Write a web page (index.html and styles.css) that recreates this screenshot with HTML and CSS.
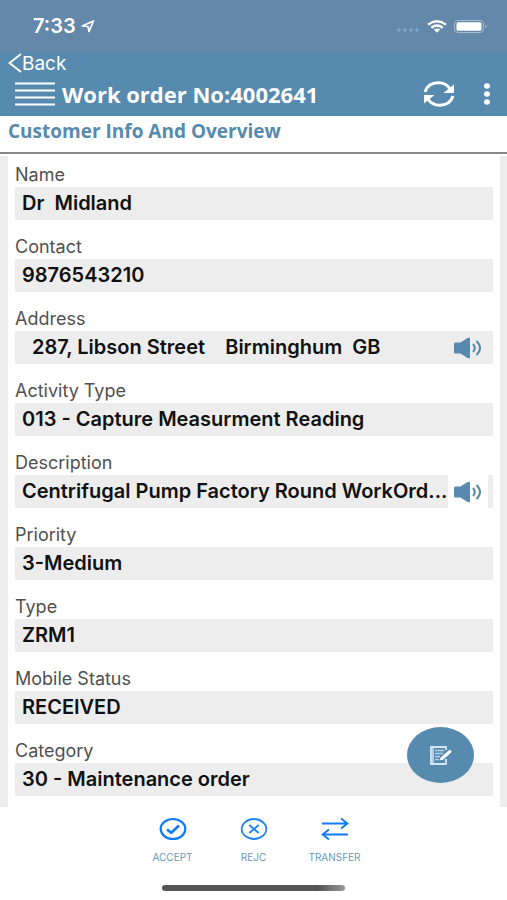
FILE: index.html
```
<!DOCTYPE html>
<html lang="en">
<head>
  <meta charset="UTF-8">
  <meta name="viewport" content="width=device-width, initial-scale=1">
  <title>Work order</title>
  <link rel="stylesheet" href="styles.css">
</head>
<body>
  <div class="status-bar">
    <span class="time">7:33</span>
    <svg class="location" width="14" height="13" viewBox="0 0 14 13"><path d="M1.200 6 L12.500 1 L8 11.500 L7 6.500 Z" fill="none" stroke="#fff" stroke-width="1.700" stroke-linejoin="round"/></svg>
    <span class="status-icons">
      <svg width="24" height="12" viewBox="0 0 24 12"><g fill="#86a5c0"><circle cx="3" cy="10" r="1.800"/><circle cx="9" cy="10" r="1.800"/><circle cx="15" cy="10" r="1.800"/><circle cx="21" cy="10" r="1.800"/></g></svg>
      <svg width="20" height="13" viewBox="0 0 20 13"><g fill="none" stroke="#fff" stroke-width="2.400"><path d="M1 4.600 Q10 -2 19 4.600"/><path d="M4.300 7.700 Q10 3.500 15.700 7.700"/></g><path d="M6.800 9.600 Q10 7.400 13.200 9.600 L10 12.800 Z" fill="#fff"/></svg>
      <svg width="34" height="13" viewBox="0 0 34 13"><rect x=".5" y=".5" width="29" height="12" rx="3.500" fill="none" stroke="#a4bbd0"/><rect x="2.500" y="2.300" width="25" height="8.400" rx="1.500" fill="#fff"/><path d="M31.300 4.500 Q34 6.500 31.300 8.500 Z" fill="#a4bbd0"/></svg>
    </span>
  </div>

  <header class="nav">
    <a class="back" href="#"><svg width="14" height="20" viewBox="0 0 14 20"><path d="M13 1 L1.500 10 L13 19" fill="none" stroke="#fff" stroke-width="2"/></svg>Back</a>
    <div class="title-row">
      <button class="icon-btn" aria-label="Menu"><svg width="40" height="24" viewBox="0 0 40 24"><path d="M0 1.500 H40 M0 8.500 H40 M0 15.500 H40 M0 22.500 H40" stroke="#fff" stroke-width="2"/></svg></button>
      <h1>Work order No:4002641</h1>
      <button class="icon-btn" aria-label="Refresh"><svg width="32" height="26" viewBox="0 0 32 26"><g fill="none" stroke="#fff" stroke-width="3"><path d="M2 11 C4 4.500 9.500 1.800 15.500 1.800 C20.500 1.800 24.500 4 27 8"/><path d="M30 15 C28 21.500 22.500 24.200 16.500 24.200 C11.500 24.200 7.500 22 5 18"/></g><path d="M31 3.500 V12 H20.500 Z M1 22.500 V14 H11.500 Z" fill="#fff"/></svg></button>
      <button class="icon-btn more" aria-label="More"><svg width="8" height="22" viewBox="0 0 8 22"><g fill="#fff"><ellipse cx="4" cy="3" rx="3" ry="2.700"/><ellipse cx="4" cy="11" rx="3" ry="2.700"/><ellipse cx="4" cy="19" rx="3" ry="2.700"/></g></svg></button>
    </div>
  </header>

  <h2 class="section-title">Customer Info And Overview</h2>

  <main>
    <dl class="card">
      <dt>Name</dt>
      <dd>Dr  Midland</dd>
      <dt>Contact</dt>
      <dd>9876543210</dd>
      <dt>Address</dt>
      <dd class="with-sound"><span class="text indent">287, Libson Street    Birminghum  GB</span><button class="sound" aria-label="Read address"><svg width="28" height="22" viewBox="0 0 28 22"><path d="M1.500 5.500 H6.500 L13.500 1 Q16 0 16 2 V20 Q16 22 13.500 21 L6.500 16.500 H1.500 Q0 16.500 0 15 V7 Q0 5.500 1.500 5.500 Z" fill="#568aae"/><path d="M19 7 Q22.500 11 19 15 M22.500 4 Q29.500 11 22.500 18" fill="none" stroke="#568aae" stroke-width="2"/></svg></button></dd>
      <dt>Activity Type</dt>
      <dd>013 - Capture Measurment Reading</dd>
      <dt>Description</dt>
      <dd class="with-sound"><span class="text">Centrifugal Pump Factory Round WorkOrd...</span><button class="sound light" aria-label="Read description"><svg width="28" height="22" viewBox="0 0 28 22"><path d="M1.500 5.500 H6.500 L13.500 1 Q16 0 16 2 V20 Q16 22 13.500 21 L6.500 16.500 H1.500 Q0 16.500 0 15 V7 Q0 5.500 1.500 5.500 Z" fill="#568aae"/><path d="M19 7 Q22.500 11 19 15 M22.500 4 Q29.500 11 22.500 18" fill="none" stroke="#568aae" stroke-width="2"/></svg></button></dd>
      <dt>Priority</dt>
      <dd>3-Medium</dd>
      <dt>Type</dt>
      <dd>ZRM1</dd>
      <dt>Mobile Status</dt>
      <dd>RECEIVED</dd>
      <dt>Category</dt>
      <dd>30 - Maintenance order</dd>
    </dl>
    <button class="fab" aria-label="Edit notes"><svg width="22" height="19" viewBox="0 0 22 19"><path d="M16 4 V1 H1 V18 H16 V13" fill="none" stroke="#d5e5f0" stroke-width="1.800"/><path d="M3 1 V18" stroke="#d5e5f0" stroke-width="1.500"/><path d="M5 4.500 H14 M5 7.500 H13 M5 10.500 H10 M5 13.500 H9" stroke="#b4cfdf" stroke-width="1.300"/><path d="M12 12.500 L20 5.500" stroke="#fff" stroke-width="3" stroke-linecap="round"/><path d="M9.500 14.500 L11 11.500 L13 13.300 Z" fill="#fff"/></svg></button>
  </main>

  <footer>
    <nav class="actions">
      <button><svg width="28" height="24" viewBox="0 0 28 24"><ellipse cx="14" cy="12" rx="12.300" ry="10" fill="none" stroke="#117bf3" stroke-width="2.200"/><path d="M8 12.500 L12.300 15.800 L20 8.500" fill="none" stroke="#117bf3" stroke-width="2.600"/></svg>ACCEPT</button>
      <button><svg width="28" height="24" viewBox="0 0 28 24"><ellipse cx="14" cy="12" rx="12.300" ry="10" fill="none" stroke="#2585f4" stroke-width="1.800"/><path d="M9.300 8 L18.700 16 M18.700 8 L9.300 16" fill="none" stroke="#2585f4" stroke-width="2"/></svg>REJC</button>
      <button><svg width="28" height="24" viewBox="0 0 28 24"><path d="M1 6.500 H26 M20 1.500 L26.500 6.500 L20 11.500 M27 17.500 H2 M8 12.500 L1.500 17.500 L8 22.500" fill="none" stroke="#117bf3" stroke-width="1.800"/></svg>TRANSFER</button>
    </nav>
    <div class="home-indicator"></div>
  </footer>
</body>
</html>
```
FILE: styles.css
```
* { box-sizing: border-box; }
body { margin: 0; font-family: Inter, Roboto, sans-serif; background: #fff; color: #111; }
button { border: 0; padding: 0; background: none; font: inherit; cursor: pointer; }
svg { display: block; }

.status-bar { display: flex; align-items: center; height: 52px; padding: 0 19px 0 33px; background: #6488aa; color: #fff; }
.time { font-size: 20px; font-weight: 600; }
.location { margin-left: 5px; }
.status-icons { display: flex; align-items: center; gap: 7px; margin-left: auto; }

.nav { height: 64px; background: #568aae; color: #fff; }
.back { display: flex; align-items: center; height: 22px; padding-left: 8px; color: #fff; font-size: 19px; text-decoration: none; }
.title-row { display: flex; align-items: center; height: 40px; padding: 0 16px 0 15px; }
.nav h1 { flex: 1; margin: 0 0 0 7px; font: bold 22px "Open Sans", sans-serif; white-space: nowrap; }
.more { margin-left: 28px; }

.section-title { margin: 0 0 2px; padding-left: 8px; height: 38px; border-bottom: 2px solid #888; font: bold 19px/30px "Open Sans", sans-serif; color: #568aae; }

main { position: relative; padding: 0 7px 0 8px; background: #ededed; }
.card { margin: 0; padding: 6px 7px 11px; background: #fff; }
dt { font-size: 18px; line-height: 25px; color: #505050; }
dd { margin: 0 0 14px; height: 33px; padding: 0 7px; background: #ededed; font-size: 20px; font-weight: 600; line-height: 33px; white-space: pre; }
dd:last-child { margin-bottom: 0; }
.with-sound { display: flex; padding-right: 5px; }
.text { flex: 1; min-width: 0; overflow: hidden; text-overflow: ellipsis; }
.indent { padding-left: 10px; }
.sound { flex: none; display: flex; align-items: center; padding: 0 6px; }
.light { background: #fff; }

.fab { position: absolute; right: 33px; bottom: 24px; display: flex; align-items: center; justify-content: center; width: 67px; height: 56px; border-radius: 50%; background: #568aae; }

footer { padding-top: 10px; }
.actions { display: flex; justify-content: center; }
.actions button { display: flex; flex-direction: column; align-items: center; gap: 9px; width: 81px; font-size: 10px; line-height: 14px; color: #6899ba; }
.home-indicator { width: 36%; height: 6px; margin: 21px auto 8px; border-radius: 3px; background: linear-gradient(90deg, #555 85%, #999); }
```
